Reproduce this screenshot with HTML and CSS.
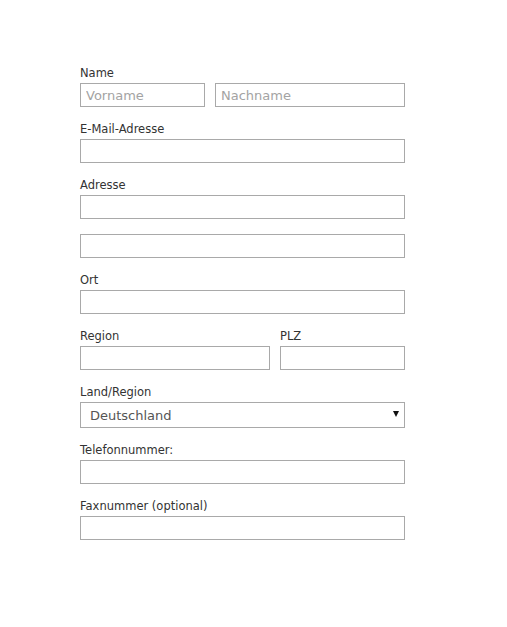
FILE: index.html
```html
<!DOCTYPE html>
<html lang="de">
<head>
<meta charset="utf-8">
<title>Adresse</title>
<link rel="stylesheet" href="styles.css">
</head>
<body>
<form class="form">
  <div class="group">
    <label class="label">Name</label>
    <div class="row">
      <input class="input first" type="text" placeholder="Vorname">
      <input class="input last" type="text" placeholder="Nachname">
    </div>
  </div>
  <div class="group">
    <label class="label">E-Mail-Adresse</label>
    <input class="input" type="text">
  </div>
  <div class="group">
    <label class="label">Adresse</label>
    <input class="input" type="text">
  </div>
  <div class="group">
    <input class="input" type="text">
  </div>
  <div class="group">
    <label class="label">Ort</label>
    <input class="input" type="text">
  </div>
  <div class="row split">
    <div class="group region">
      <label class="label">Region</label>
      <input class="input" type="text">
    </div>
    <div class="group plz">
      <label class="label">PLZ</label>
      <input class="input" type="text">
    </div>
  </div>
  <div class="group">
    <label class="label">Land/Region</label>
    <div class="select-wrap">
      <select class="select">
        <option>Deutschland</option>
      </select>
      <span class="arrow"></span>
    </div>
  </div>
  <div class="group">
    <label class="label">Telefonnummer:</label>
    <input class="input" type="text">
  </div>
  <div class="group">
    <label class="label">Faxnummer (optional)</label>
    <input class="input" type="text">
  </div>
</form>
</body>
</html>
```

FILE: styles.css
```css
html, body {
  margin: 0;
  padding: 0;
  background: #ffffff;
}

body {
  font-family: "DejaVu Sans", Verdana, sans-serif;
  color: #333333;
}

.form {
  width: 325px;
  padding: 66px 0 0 80px;
  display: flex;
  flex-direction: column;
}

.group {
  display: flex;
  flex-direction: column;
  margin-bottom: 15px;
}

.label {
  display: block;
  font-size: 11.5px;
  line-height: 15px;
  margin-bottom: 2px;
  color: #333333;
}

.row {
  display: flex;
  gap: 10px;
}

.input {
  box-sizing: border-box;
  width: 100%;
  height: 24px;
  margin: 0;
  border: 1px solid #a9a9a9;
  border-radius: 0;
  padding: 0 5px;
  font-family: "DejaVu Sans", Verdana, sans-serif;
  font-size: 13px;
  color: #333333;
  background: #ffffff;
  outline: none;
}

.input::placeholder {
  color: #a3a3a3;
}

.first {
  width: 125px;
  flex: none;
}

.last {
  flex: 1;
}

.region {
  width: 190px;
  flex: none;
}

.plz {
  flex: 1;
}

.select-wrap {
  position: relative;
}

.select {
  box-sizing: border-box;
  width: 100%;
  height: 26px;
  margin: 0;
  border: 1px solid #a9a9a9;
  border-radius: 0;
  padding: 0 9px;
  font-family: "DejaVu Sans", Verdana, sans-serif;
  font-size: 13px;
  color: #555555;
  background: #ffffff;
  appearance: none;
  -webkit-appearance: none;
  outline: none;
}

.arrow {
  position: absolute;
  right: 6px;
  top: 9px;
  width: 0;
  height: 0;
  border-left: 3px solid transparent;
  border-right: 3px solid transparent;
  border-top: 6px solid #111111;
  pointer-events: none;
}
```
